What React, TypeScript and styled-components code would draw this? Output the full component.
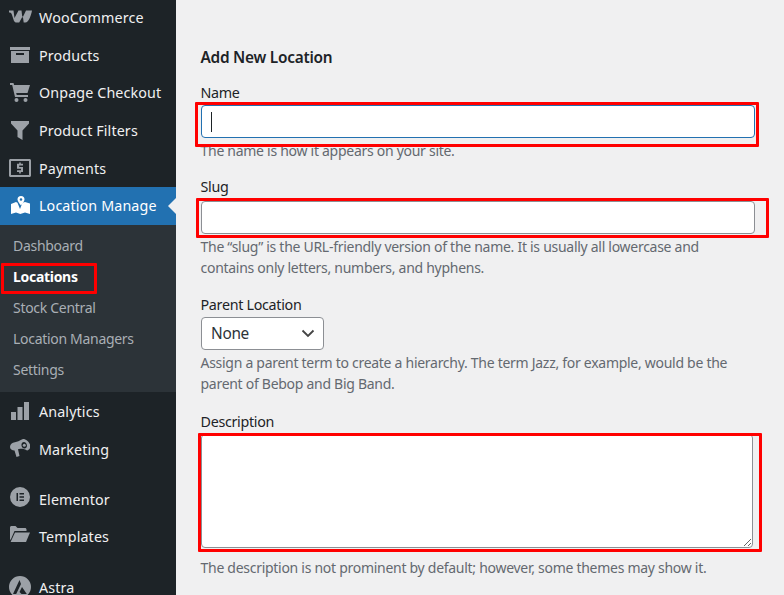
import * as React from 'react';
import styled, { createGlobalStyle } from 'styled-components';

const GlobalStyle = createGlobalStyle`
    html, body {
        margin: 0;
        padding: 0;
        height: 595px;
        overflow: hidden;
        background: #f0f0f1;
    }

    body {
        font-family: "Noto Sans", "Open Sans", sans-serif;
        font-size: 14.3px;
    }
`;

const Page = styled.div`
    display: flex;
    width: 784px;
    height: 595px;
    overflow: hidden;
`;

const Sidebar = styled.nav`
    width: 176px;
    flex: none;
    background: #1d2327;
`;

const SidebarList = styled.div`
    margin-top: -1px;
`;

const MenuItem = styled.div<{ $active?: boolean }>`
    position: relative;
    display: flex;
    align-items: center;
    height: 37.6px;
    background: ${p => p.$active ? '#2271b1' : 'transparent'};
    color: ${p => p.$active ? '#fff' : '#f0f0f1'};
    font-size: 14.3px;
    letter-spacing: 0.12px;
`;

const IconSlot = styled.span<{ $active?: boolean; $lift?: number }>`
    width: 39px;
    flex: none;
    display: flex;
    justify-content: center;
    padding-left: 1px;
    margin-bottom: ${p => p.$lift ?? 0}px;
    box-sizing: border-box;
    color: ${p => p.$active ? '#fff' : '#9ca1a7'};
`;

const ActiveArrow = styled.span`
    position: absolute;
    right: 0;
    top: 50%;
    margin-top: -8px;
    border: 8px solid transparent;
    border-right-color: #f0f0f1;
    border-left-width: 0;
`;

const SubMenu = styled.div`
    background: #2c3338;
    padding: 5px 0 7.1px;
`;

const SubItem = styled.div<{ $current?: boolean }>`
    position: relative;
    height: 31px;
    line-height: 31px;
    padding-left: 13px;
    font-size: 14px;
    letter-spacing: -0.3px;
    font-weight: ${p => p.$current ? 700 : 400};
    color: ${p => p.$current ? '#fff' : '#a9afb5'};
`;

const Separator = styled.div<{ $height: number }>`
    height: ${p => p.$height}px;
`;

const Main = styled.main`
    flex: 1;
    padding: 46px 0 0 25px;
    color: #1d2327;
`;

const Title = styled.h2`
    margin: 0 0 13px -0.5px;
    font-size: 15.4px;
    line-height: 24px;
    font-weight: 600;
    letter-spacing: -0.25px;
`;

const Field = styled.div<{ $gap: number }>`
    position: relative;
    width: 554px;
    margin-bottom: ${p => p.$gap}px;
`;

const Label = styled.label<{ $gap?: number }>`
    display: block;
    margin-left: -0.5px;
    font-size: 14.3px;
    line-height: 20px;
    letter-spacing: -0.3px;
    margin-bottom: ${p => p.$gap ?? 2}px;
`;

const TextInput = styled.input<{ $focused?: boolean }>`
    display: block;
    box-sizing: border-box;
    width: 100%;
    height: 33px;
    padding: 0 9px;
    background: #fff;
    border: 1px solid ${p => p.$focused ? '#2271b1' : '#8c8f94'};
    border-radius: 4px;
    outline: none;
`;

const Caret = styled.span`
    position: absolute;
    left: 10px;
    top: 29px;
    width: 1px;
    height: 20px;
    background: #1d2327;
`;

const SelectBox = styled.select`
    display: block;
    box-sizing: border-box;
    width: 123px;
    height: 33px;
    padding: 0 9px;
    appearance: none;
    font-family: inherit;
    font-size: 15.4px;
    letter-spacing: -0.3px;
    color: #2c3338;
    background: #fff url("data:image/svg+xml,%3Csvg xmlns='http://www.w3.org/2000/svg' width='14' height='9' viewBox='0 0 14 9'%3E%3Cpath d='M1.5 1.5 7 7l5.5-5.5' fill='none' stroke='%23444' stroke-width='1.8'/%3E%3C/svg%3E") no-repeat right 8px center;
    border: 1px solid #8c8f94;
    border-radius: 4px;
`;

const TextArea = styled.textarea`
    display: block;
    box-sizing: border-box;
    width: 552px;
    height: 114px;
    padding: 2px 6px;
    background: #fff;
    border: 1px solid #8c8f94;
    border-radius: 4px;
    outline: none;
`;

const Help = styled.p<{ $top?: number }>`
    margin: 0 0 0 -0.5px;
    padding-top: ${p => p.$top ?? 2}px;
    font-size: 14px;
    line-height: 21.45px;
    letter-spacing: -0.28px;
    color: #646970;
`;

// red annotation rectangles lying over the screenshot
const Highlight = styled.span<{ $top: number; $left: number; $width: number; $height: number }>`
    position: absolute;
    top: ${p => p.$top}px;
    left: ${p => p.$left}px;
    width: ${p => p.$width}px;
    height: ${p => p.$height}px;
    box-sizing: border-box;
    border: 3px solid #f00;
    border-radius: 1px;
    pointer-events: none;
`;

const Svg = styled.svg`
    display: block;
    fill: currentColor;
`;

const WooIcon = () => (
    <Svg width="23" height="13" viewBox="0 0 23 13">
        <path d="M0 .5h4.500l1 7.500L9.500.5h3l.9 7.500L17 .5h6c-.7 4-3 12-6.700 12h-1.600l-.9-6.500-3.600 6.500H7.500c-1.200 0-2-.6-2.500-1.500L3 5C2.500 3 1.500 2.500 0 2.500z" />
    </Svg>
);

const ArchiveIcon = () => (
    <Svg width="20" height="16" viewBox="0 0 20 16">
        <path d="M0 0h20v3H0zM1 4h18v12H1zM6 6v2h8V6z" fillRule="evenodd" />
    </Svg>
);

const CartIcon = () => (
    <Svg width="20" height="19" viewBox="0 0 20 19">
        <path d="M0 0h3.500l.6 2H20l-2.500 8H6.200l.5 2H18v2H5L2.200 2H0z" />
        <circle cx="6.500" cy="17" r="2" />
        <circle cx="15.500" cy="17" r="2" />
    </Svg>
);

const FunnelIcon = () => (
    <Svg width="18" height="19" viewBox="0 0 18 19">
        <path d="M0 0h18v2.500l-6.500 7V19l-5-3V9.500L0 2.500z" />
    </Svg>
);

const PaymentIcon = () => (
    <Svg width="22" height="18" viewBox="0 0 22 18">
        <path fillRule="evenodd" d="M1.500 0h19c.8 0 1.500.7 1.500 1.500v15c0 .8-.7 1.500-1.500 1.500h-19C.7 18 0 17.300 0 16.500v-15C0 .7.700 0 1.500 0zM2 2v14h18V2z" />
        <path d="M10.200 3.500h1.600v1.300H14v1.700h-3.800v1.600H14V13h-2.200v1.500h-1.600V13H8v-1.700h4V9.800H8V4.800h2.200z" />
    </Svg>
);

const MapIcon = () => (
    <Svg width="19" height="19" viewBox="0 0 19 19">
        <path d="M0 8l5-2 1.500.7L9 13l2.500-6.300L14 6l5 1.500V18l-5-1.500-4.700 1.500L5 16.500 0 18z" />
        <path fillRule="evenodd" d="M12.500 0a3.500 3.500 0 0 1 3.500 3.500c0 2-3.500 6-3.500 6S9 5.500 9 3.500A3.500 3.500 0 0 1 12.500 0zm0 2.200a1.300 1.300 0 1 0 0 2.600 1.300 1.300 0 0 0 0-2.600z" transform="translate(-2.500 0)" />
    </Svg>
);

const ChartIcon = () => (
    <Svg width="18" height="18" viewBox="0 0 18 18">
        <path d="M0 10h5v8H0zM6.500 5h5v13h-5zM13 0h5v18h-5z" />
    </Svg>
);

const MegaphoneIcon = () => (
    <Svg width="20" height="20" viewBox="0 0 20 20">
        <path fillRule="evenodd" d="M13 0c3 0 6 2.500 7 5.500s-.5 5.500-3 6c-2-1.500-5-2-8-1.500l-1 .3 1.500 6.700-3 1-2-6.500C2 11.500 0 10 0 8s1-3.500 3-4.300C7 3 10 1.500 13 0zm1 3c-1.700 0-2.800 1.500-2.500 3.500S13.500 10 15 9.500 17.300 7.500 16.800 5.700 15.300 3 14 3z" />
        <circle cx="14.300" cy="6.300" r="1.500" />
    </Svg>
);

const ElementorIcon = () => (
    <Svg width="20" height="20" viewBox="0 0 20 20">
        <path fillRule="evenodd" d="M10 0a10 10 0 1 1 0 20 10 10 0 0 1 0-20zM6.500 6v8H8V6zm3 0v1.500h4.500V6zm0 3.250v1.500h4.500v-1.500zm0 3.250V14h4.500v-1.500z" />
    </Svg>
);

const FolderIcon = () => (
    <Svg width="20" height="16" viewBox="0 0 20 16">
        <path d="M0 1.500C0 .7.700 0 1.500 0h4L7.500 2H15c.8 0 1.500.7 1.500 1.500V5H4.500L1 13 0 14z" />
        <path d="M5 6.500h15L16 16H.6z" />
    </Svg>
);

const AstraIcon = () => (
    <Svg width="22" height="22" viewBox="0 0 22 22">
        <path fillRule="evenodd" d="M11 0a11 11 0 1 1 0 22 11 11 0 0 1 0-22zM10.500 4 4 18h3.200l4.800-10zM13 11l-2.500 5 2 2h5.300z" />
    </Svg>
);

const mainTop = [
    { label: 'WooCommerce', icon: <WooIcon />, lift: 2 },
    { label: 'Products', icon: <ArchiveIcon />, lift: 0 },
    { label: 'Onpage Checkout', icon: <CartIcon />, lift: 0 },
    { label: 'Product Filters', icon: <FunnelIcon />, lift: 0 },
    { label: 'Payments', icon: <PaymentIcon />, lift: 0 },
];

const subItems = ['Dashboard', 'Locations', 'Stock Central', 'Location Managers', 'Settings'];

export default function App() {
    return (
        <Page>
            <GlobalStyle />
            <Sidebar>
                <SidebarList>
                    {mainTop.map(item => (
                        <MenuItem key={item.label}>
                            <IconSlot $lift={item.lift}>{item.icon}</IconSlot>
                            {item.label}
                        </MenuItem>
                    ))}
                    <MenuItem $active>
                        <IconSlot $active><MapIcon /></IconSlot>
                        Location Manage
                        <ActiveArrow />
                    </MenuItem>
                    <SubMenu>
                        {subItems.map(label => (
                            <SubItem key={label} $current={label === 'Locations'}>
                                {label}
                                {label === 'Locations' && <Highlight $top={2.4} $left={1} $width={96} $height={31} />}
                            </SubItem>
                        ))}
                    </SubMenu>
                    <Separator $height={1.5} />
                    <MenuItem><IconSlot $lift={2}><ChartIcon /></IconSlot>Analytics</MenuItem>
                    <MenuItem><IconSlot $lift={2}><MegaphoneIcon /></IconSlot>Marketing</MenuItem>
                    <Separator $height={12.2} />
                    <MenuItem><IconSlot $lift={4}><ElementorIcon /></IconSlot>Elementor</MenuItem>
                    <MenuItem><IconSlot $lift={6}><FolderIcon /></IconSlot>Templates</MenuItem>
                    <Separator $height={13} />
                    <MenuItem><IconSlot $lift={1}><AstraIcon /></IconSlot>Astra</MenuItem>
                </SidebarList>
            </Sidebar>
            <Main>
                <Title>Add New Location</Title>
                <Field $gap={15.5}>
                    <Label>Name</Label>
                    <TextInput $focused />
                    <Caret />
                    <Help>The name is how it appears on your site.</Help>
                    <Highlight $top={19} $left={-6} $width={564} $height={45} />
                </Field>
                <Field $gap={16}>
                    <Label $gap={4}>Slug</Label>
                    <TextInput />
                    <Help>The “slug” is the URL-friendly version of the name. It is usually all lowercase and contains only letters, numbers, and hyphens.</Help>
                    <Highlight $top={21} $left={-5} $width={573} $height={40} />
                </Field>
                <Field $gap={17}>
                    <Label>Parent Location</Label>
                    <SelectBox defaultValue="None">
                        <option>None</option>
                    </SelectBox>
                    <Help>Assign a parent term to create a hierarchy. The term Jazz, for example, would be the parent of Bebop and Big Band.</Help>
                </Field>
                <Field $gap={0}>
                    <Label>Description</Label>
                    <TextArea />
                    <Help $top={9}>The description is not prominent by default; however, some themes may show it.</Help>
                    <Highlight $top={21} $left={-3} $width={564} $height={119} />
                </Field>
            </Main>
        </Page>
    );
}
